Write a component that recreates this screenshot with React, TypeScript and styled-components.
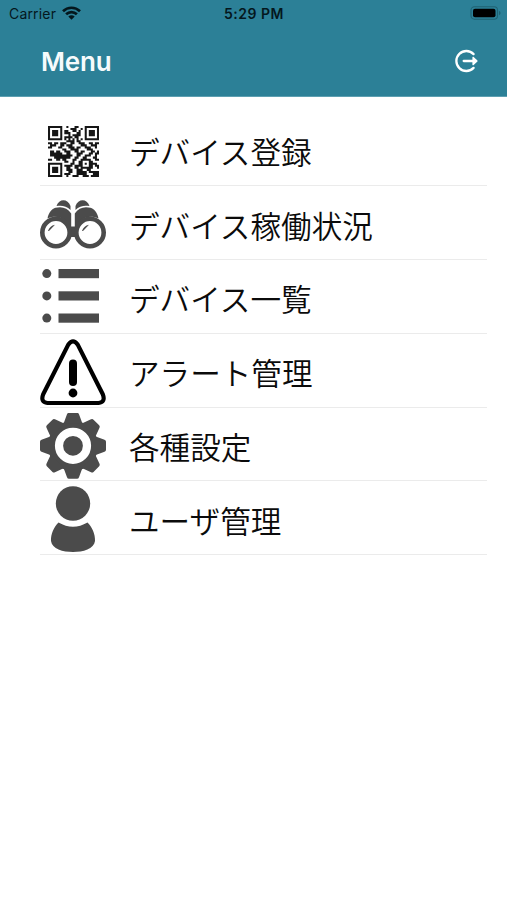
import React from "react";
import styled, { createGlobalStyle } from "styled-components";

const GlobalStyle = createGlobalStyle`
  * { box-sizing: border-box; }
  body { margin: 0; background: #fff; }
`;

const Screen = styled.main`
  width: 507px;
  height: 900px;
  overflow: hidden;
  background: #fff;
  color: #0b0b0b;
  font-family: Inter, "Noto Sans CJK JP", sans-serif;
`;

const Header = styled.header`
  height: 97px;
  background: #2c8097;
  border-bottom: 1px solid #5d9fb1;
`;

const StatusBar = styled.div`
  display: grid;
  grid-template-columns: 1fr auto 1fr;
  align-items: center;
  height: 27px;
  padding: 0 6px 0 9px;
  color: #04171d;
  font-size: 14px;
  line-height: 27px;
`;

const Carrier = styled.div`
  display: flex;
  align-items: center;
  gap: 6px;
  letter-spacing: 0.18px;

  svg {
    margin-top: -2px;
  }
`;

const Clock = styled.time`
  padding-right: 2px;
  font-weight: 600;
  font-size: 14px;
  letter-spacing: 0.5px;
`;

const BatterySlot = styled.div`
  display: flex;
  justify-content: flex-end;
  margin-top: -1px;
`;

const TitleBar = styled.div`
  display: flex;
  align-items: center;
  justify-content: space-between;
  height: 69px;
  padding: 0 28px 0 41px;
`;

const Title = styled.h1`
  margin: 0;
  color: #f6fbfc;
  font-size: 26px;
  font-weight: 600;
  letter-spacing: -0.2px;
`;

const LogoutButton = styled.button`
  display: flex;
  margin-top: -2px;
  padding: 0;
  border: 0;
  background: none;
`;

const Menu = styled.ul`
  display: grid;
  grid-template-rows: repeat(6, 73.8px);
  margin: 0;
  padding: 15.5px 20px 0 40px;
  list-style: none;
`;

const MenuItem = styled.li`
  display: flex;
  align-items: center;
  gap: 23px;
  border-bottom: 1px solid #ebebeb;
`;

const IconSlot = styled.span`
  display: flex;
  flex: none;
  width: 66px;
  height: 68px;
  margin-top: 5px;
`;

const Label = styled.span`
  font-family: "Noto Sans CJK JP", sans-serif;
  font-size: 30.6px;
  font-weight: 350;
  line-height: 44px;
  margin-top: 4px;
  white-space: nowrap;
`;

const WifiIcon = () => (
  <svg width="19" height="14" viewBox="0 0 19 14">
    <g fill="none" stroke="#04171d" strokeWidth="2.7">
      <path d="M1 5.2C5.8.6 13.2.6 18 5.2" />
      <path d="M4.1 8.3c3.1-3 7.7-3 10.8 0" />
    </g>
    <path d="M6.3 10.4c1.8-1.7 4.6-1.7 6.4 0L9.5 13.7z" fill="#04171d" />
  </svg>
);

const BatteryIcon = () => (
  <svg width="31" height="14" viewBox="0 0 31 14">
    <rect x="1" y=".8" width="26.5" height="12.4" rx="3.4" fill="none" stroke="#1f6273" strokeWidth="1.1" />
    <rect x="3" y="2.7" width="22.5" height="8.6" rx="2" fill="#000" />
    <path d="M29 5v4.2c2-.7 2-3.5 0-4.2" fill="#1f6273" />
  </svg>
);

const LogoutIcon = () => (
  <svg width="25" height="24" viewBox="0 0 25 24" fill="none" stroke="#fff" strokeWidth="2.3" strokeLinecap="round" strokeLinejoin="round">
    <path d="M19.6 5.1A10 10 0 1 0 19.6 18.9" />
    <path d="M9.7 12H22" />
    <path d="M19 8.3L23 12l-4 3.7z" fill="#fff" strokeWidth="1.2" />
  </svg>
);

const QR_ROWS = [
  "1111111001000110001111111",
  "1000001000011100101000001",
  "1011101011001101001011101",
  "1011101011100011001011101",
  "1011101000101111001011101",
  "1000001011110110001000001",
  "1111111010101010101111111",
  "0000000001111011000000000",
  "1101101110011001110011011",
  "0111001101110000111001110",
  "1100011000111011001110010",
  "0000000110011110000111000",
  "0110110011100110110001101",
  "0111111001100011100011011",
  "0111111111110011001110010",
  "0001111111100110011000110",
  "1100110110001100111110011",
  "0000000011001001100011000",
  "1111111000011001101011110",
  "1000001011110111100011011",
  "1011101001100110111111001",
  "1011101001110011100110000",
  "1011101000110011111011111",
  "1000001011100011111000111",
  "1111111001001110011101111",
];

const QR_PATH = QR_ROWS.flatMap((row, y) =>
  [...row].map((cell, x) => (cell === "1" ? `M${x} ${y}h1v1h-1z` : "")),
).join("");

const QrIcon = () => (
  <svg width="66" height="68" viewBox="0 0 66 68">
    <path d={QR_PATH} fill="#161616" transform="translate(8 9) scale(2.04)" />
  </svg>
);

const BinocularsIcon = () => (
  <svg width="66" height="68" viewBox="0 0 66 68">
    <g fill="#4b4b4b" transform="translate(0 .5)">
      <path d="M16.5 14.6C19 6.5 28 7 30.5 14.5V18.5C26.5 14.5 21.5 13.6 16.5 14.6z" />
      <path d="M49.5 14.6C47 6.5 38 7 35.5 14.5V18.5C39.5 14.5 44.5 13.6 49.5 14.6z" />
      <path d="M7.5 27C8.5 21 12 17.5 15.5 16.3C22 14.5 27.500 16.500 31.200 22V38C27 27 17 22.500 7.500 27z" />
      <path d="M58.5 27C57.5 21 54 17.5 50.5 16.3C44 14.5 38.500 16.500 34.800 22V38C39 27 49 22.500 58.500 27z" />
      <path d="M28 35h10v10.5H28z" />
    </g>
    {[16, 50].map((cx) => (
      <g key={cx} transform="translate(0 .5)">
        <circle cx={cx} cy="41" r="13.7" fill="#fff" stroke="#4b4b4b" strokeWidth="4.6" />
        <path d={`M${cx - 8} 39.5Q${cx - 6.5} 34.5 ${cx - 1} 33.3L${cx - 7} 39.5z`} fill="#4b4b4b" />
      </g>
    ))}
  </svg>
);

const ListIcon = () => (
  <svg width="66" height="68" viewBox="0 0 66 68" fill="#4b4b4b">
    {[8.6, 30.9, 53.1].map((cy) => (
      <g key={cy}>
        <circle cx="6.8" cy={cy} r="4.5" />
        <rect x="18.5" y={cy - 4.6} width="40.5" height="9.2" />
      </g>
    ))}
  </svg>
);

const AlertIcon = () => (
  <svg width="66" height="68" viewBox="0 0 66 68" fill="none" stroke="#000">
    <path d="M28.4 5.4Q33-.8 37.6 5.4L62.8 55.3Q65.8 63.2 58.5 64H7.5Q.2 63.2 3.2 55.3z" strokeWidth="4.2" strokeLinejoin="round" />
    <path d="M33 24.5v18.5" strokeWidth="8" strokeLinecap="round" />
    <circle cx="33" cy="54" r="4.4" fill="#000" stroke="none" />
  </svg>
);

const GearIcon = () => (
  <svg width="66" height="68" viewBox="0 0 66 68">
    <g fill="#4b4b4b" transform="translate(33 32.8)">
      <circle r="25" />
      {[0, 45, 90, 135, 180, 225, 270, 315].map((angle) => (
        <path key={angle} d="M-9.5-22L-6-31.5Q-5.5-33-4-33H4Q5.5-33 6-31.5L9.5-22z" transform={`rotate(${angle})`} />
      ))}
      <circle r="14" fill="none" stroke="#fff" strokeWidth="8.2" />
    </g>
  </svg>
);

const UserIcon = () => (
  <svg width="66" height="68" viewBox="0 0 66 68" fill="#4b4b4b">
    <circle cx="33" cy="17.5" r="17.2" />
    <path d="M18.5 36.5Q33 45 47.5 36.5C52 41 55.3 48 55 55C54 63 43 66 33 66S12 63 11 55C10.7 48 14 41 18.5 36.5z" />
  </svg>
);

const ITEMS = [
  { label: "デバイス登録", Icon: QrIcon },
  { label: "デバイス稼働状況", Icon: BinocularsIcon },
  { label: "デバイス一覧", Icon: ListIcon },
  { label: "アラート管理", Icon: AlertIcon },
  { label: "各種設定", Icon: GearIcon },
  { label: "ユーザ管理", Icon: UserIcon },
];

export default function App() {
  return (
    <Screen lang="ja">
      <GlobalStyle />
      <Header>
        <StatusBar>
          <Carrier>Carrier<WifiIcon /></Carrier>
          <Clock>5:29 PM</Clock>
          <BatterySlot><BatteryIcon /></BatterySlot>
        </StatusBar>
        <TitleBar>
          <Title>Menu</Title>
          <LogoutButton aria-label="ログアウト"><LogoutIcon /></LogoutButton>
        </TitleBar>
      </Header>
      <Menu>
        {ITEMS.map(({ label, Icon }) => (
          <MenuItem key={label}>
            <IconSlot><Icon /></IconSlot>
            <Label>{label}</Label>
          </MenuItem>
        ))}
      </Menu>
    </Screen>
  );
}
